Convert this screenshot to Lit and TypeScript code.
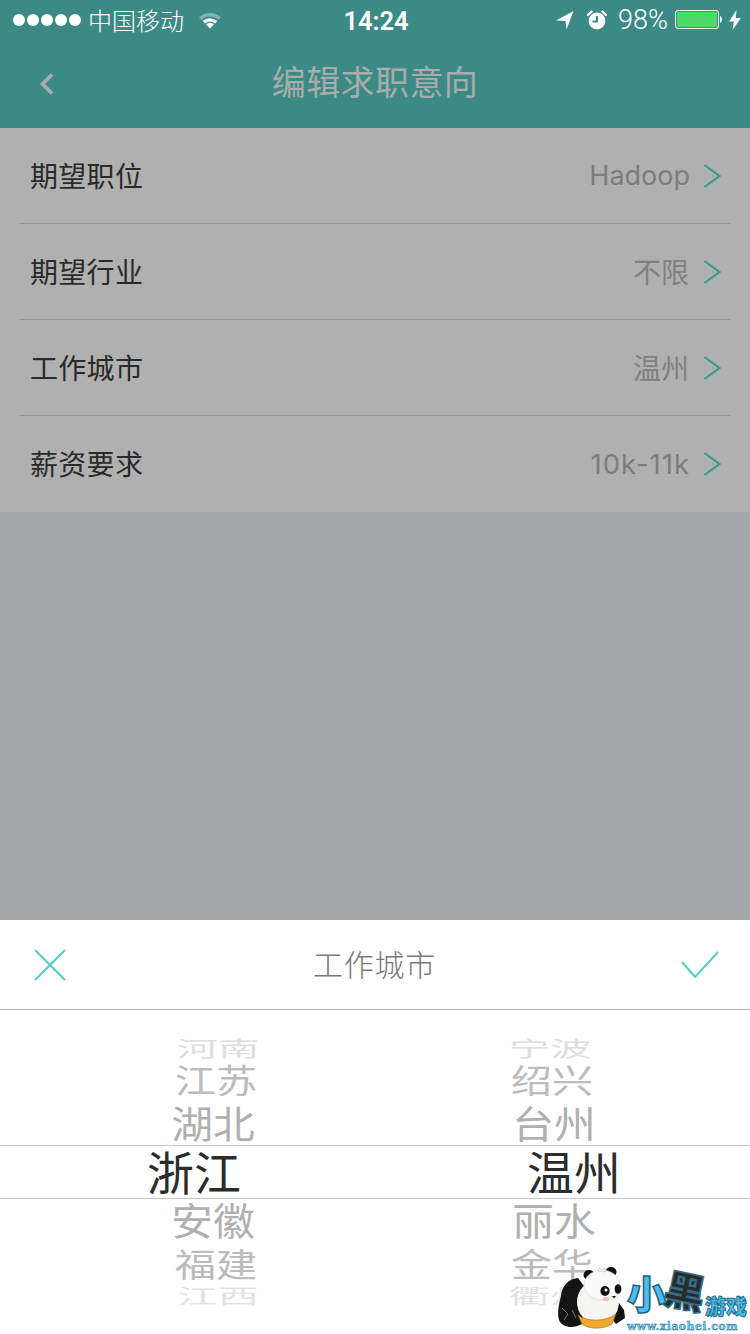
import { LitElement, html, css, svg, unsafeCSS } from "lit";
import { customElement } from "lit/decorators.js";

const CJK = unsafeCSS(`"Noto Sans CJK SC", "Noto Sans", sans-serif`);
const rows = [
  { k: "期望职位", v: "Hadoop", cls: "latin" },
  { k: "期望行业", v: "不限", cls: "" },
  { k: "工作城市", v: "温州", cls: "" },
  { k: "薪资要求", v: "10k-11k", cls: "latin num" },
];
const columns = [
  { cls: "left", items: ["河南", "江苏", "湖北", "浙江", "安徽", "福建", "江西"] },
  { cls: "right", items: ["宁波", "绍兴", "台州", "温州", "丽水", "金华", "衢州"] },
];
const chevron = svg`<svg class="chev" viewBox="0 0 18 24" width="18" height="24"><path d="M1.5 1 L16.5 12 L1.5 23" fill="none" stroke="#329a93" stroke-width="2"/></svg>`;

@customElement("app-root")
export class AppRoot extends LitElement {
  static styles = css`
    :host { display: block; width: 750px; height: 1334px; position: relative; overflow: hidden; background: #a3a7a8; font-family: ${CJK}; }
    .screen { display: flex; flex-direction: column; height: 1334px; }
    .head { height: 128px; background: #3c8a85; color: #fff; flex: none; }
    .status { height: 40px; display: flex; align-items: center; padding: 0 9px 0 13px; position: relative; }
    .dots { display: flex; gap: 2px; margin-right: 7px; }
    .dots i { width: 12px; height: 12px; border-radius: 50%; background: #fff; }
    .carrier { font-size: 24px; line-height: 40px; margin-right: 14px; font-weight: 300; }
    .clock { position: absolute; left: 2px; right: 0; text-align: center; font: 600 25.5px/40px Roboto, sans-serif; padding-top: 1px; }
    .sright { margin-left: auto; display: flex; align-items: center; }
    .loc { margin-right: 13px; }
    .bolt { margin-left: 6px; }
    .pct { font: 300 27px/40px Roboto, sans-serif; margin: 0 7px 0 11px; }
    .nav { height: 88px; display: flex; align-items: center; justify-content: center; position: relative; }
    .back { position: absolute; left: 39px; top: 32px; }
    .title { font-size: 34px; color: #a8acac; font-weight: 400; letter-spacing: .4px; line-height: 1; padding-bottom: 6px; }
    .list { background: #b0b0b0; flex: none; height: 384px; }
    .row { height: 96px; margin: 0 20px; box-sizing: border-box; border-bottom: 1px solid #959595; display: flex; align-items: center; padding: 0 9px 0 10px; }
    .row:last-child { border-bottom: none; }
    .k { font-size: 28px; color: #2a2a2a; font-weight: 400; letter-spacing: .3px; padding-bottom: 2px; }
    .v { margin-left: auto; font-size: 28px; color: #808080; font-weight: 400; margin-right: 14px; padding-bottom: 2px; }
    .v.latin { font-family: Inter, sans-serif; font-size: 27px; font-weight: 400; padding-bottom: 0; color: #7c7c7c; margin-right: 13px; }
    .v.num { font-size: 27.5px; letter-spacing: 1px; }
    .chev { display: block; }
    .gap { flex: 1; }
    .sheet { flex: none; height: 414px; background: #fff; display: flex; flex-direction: column; }
    .bar { height: 90px; flex: none; box-sizing: border-box; border-bottom: 1px solid #ababab; display: flex; align-items: center; justify-content: space-between; padding: 0 31px 0 34px; }
    .bar span { font-size: 30px; color: #7a7a7a; font-weight: 300; letter-spacing: .8px; padding-bottom: 3px; margin-left: 2px; }
    .wheel { position: relative; flex: 1; display: grid; grid-template-columns: 1fr 1fr; padding-top: 26px; align-content: start; }
    .rule { position: absolute; left: 0; right: 0; height: 1px; background: #c6c6c6; }
    .rule.a { top: 135px; }
    .rule.b { top: 188px; }
    .col { display: flex; flex-direction: column; align-items: flex-start; }
    .col.left { padding-left: 174px; }
    .col.right { padding-left: 136px; }
    .it { white-space: nowrap; line-height: 1; display: flex; align-items: center; justify-content: center; width: 84px; }
    .it b { font-weight: 400; display: block; }
    .i0 { height: 22px; font-size: 21px; color: #dedede; }
    .i0 b { transform: scaleX(1.98); }
    .i1 { height: 44px; font-size: 33px; color: #bcbcbc; }
    .i1 b { transform: translateY(-1px) scaleX(1.25); }
    .i2 { height: 45px; font-size: 38px; color: #b0b0b0; }
    .i2 b { transform: translateY(-3px) scaleX(1.1); }
    .i3 { height: 52px; font-size: 46px; color: #2c2c2c; width: 92px; }
    .i3 b { transform: translateY(-3px) scaleX(1.02); }
    .i4 { height: 46px; font-size: 38px; color: #b0b0b0; }
    .i4 b { transform: translateY(-3px) scaleX(1.1); }
    .i5 { height: 41px; font-size: 33px; color: #bcbcbc; }
    .i5 b { transform: translateY(-2px) scaleX(1.25); }
    .i6 { height: 21px; font-size: 20px; color: #e2e2e2; }
    .i6 b { transform: translateY(-1px) scaleX(2.05); }
    .left .i0, .left .i6 { margin-left: 2px; }
    .left .i2, .left .i4 { margin-left: -3px; }
    .left .i3 { margin-left: -26px; }
    .right .i0, .right .i6 { margin-left: -3px; }
    .right .i1, .right .i5 { margin-left: -1px; }
    .right .i2, .right .i4 { margin-left: 1px; }
    .right .i3 { margin-left: 17px; }
    .mark { position: absolute; left: 556px; top: 1264px; width: 194px; height: 70px; }
    .mark svg { position: absolute; left: 0; top: 0; }
    .xiao { position: absolute; left: 71px; top: 9px; font: 900 39px/1 ${CJK}; color: #4dbcee; -webkit-text-stroke: 1.5px #1d5f80; }
    .hei { position: absolute; left: 109px; top: 5px; font: 900 41px/1 ${CJK}; color: #2b2b2b; -webkit-text-stroke: 1.5px #2f6f8c; transform: rotate(12deg); }
    .game { position: absolute; left: 149px; top: 31px; font: 900 21px/1 ${CJK}; color: #4fb9e6; -webkit-text-stroke: 1px #1d6f90; }
    .url { position: absolute; left: 71px; top: 57px; font: 700 11px/1 "DejaVu Serif", serif; color: #6cc8ee; letter-spacing: .4px; -webkit-text-stroke: .4px #1d6f90; }
  `;

  render() {
    return html`<div class="screen">
      <div class="head">
        <div class="status">
          <div class="dots"><i></i><i></i><i></i><i></i><i></i></div>
          <span class="carrier">中国移动</span>
          <svg width="24" height="18" viewBox="0 0 24 18">
            <path d="M1 6.5 A16 16 0 0 1 23 6.5 L20.6 9 A12.6 12.6 0 0 0 3.4 9 Z" fill="#fff" opacity=".35"/>
            <path d="M4.7 10 A11 11 0 0 1 19.3 10 L17 12.4 A8 8 0 0 0 7 12.4 Z" fill="#fff"/>
            <path d="M8 13.3 A6.4 6.4 0 0 1 16 13.3 L12 17.6 Z" fill="#fff"/>
          </svg>
          <div class="clock">14:24</div>
          <div class="sright">
            <svg class="loc" width="18" height="20" viewBox="0 0 18 20"><path d="M0 10.5 L17.5 1 L10.5 19.5 L9.5 11 Z" fill="#fff"/></svg>
            <svg width="20" height="20" viewBox="0 0 20 20"><circle cx="10" cy="11" r="8.4" fill="#fff"/><path d="M10 6 V11.5 H5.5" fill="none" stroke="#3c8a85" stroke-width="2"/><path d="M1 5 L4.5 1.5 M19 5 L15.5 1.5" stroke="#fff" stroke-width="2.4" stroke-linecap="round"/></svg>
            <span class="pct">98%</span>
            <svg width="48" height="20" viewBox="0 0 48 20"><rect x=".5" y=".5" width="43" height="18" rx="2.5" fill="none" stroke="#fff"/><rect x="2" y="2" width="40" height="15" rx="1.2" fill="#4cdb6b"/><path d="M45 6 C47.5 6.5 47.5 12.5 45 13 Z" fill="#fff"/></svg>
            <svg class="bolt" width="12" height="20" viewBox="0 0 12 20"><path d="M7.5 0 L0 11.5 H4.8 L3.5 20 L12 8 H6.8 Z" fill="#fff"/></svg>
          </div>
        </div>
        <div class="nav">
          <svg class="back" width="16" height="24" viewBox="0 0 16 24"><path d="M13 2.5 L3.5 12 L13 21.5" fill="none" stroke="#a8acac" stroke-width="3.6"/></svg>
          <span class="title">编辑求职意向</span>
        </div>
      </div>
      <div class="list">
        ${rows.map(
          (r) => html`<div class="row">
            <span class="k">${r.k}</span>
            <span class="v ${r.cls}">${r.v}</span>
            ${chevron}
          </div>`
        )}
      </div>
      <div class="gap"></div>
      <div class="sheet">
        <div class="bar">
          <svg width="32" height="32" viewBox="0 0 32 32"><path d="M1 1 L31 31 M31 1 L1 31" fill="none" stroke="#52cdc6" stroke-width="2"/></svg>
          <span>工作城市</span>
          <svg width="38" height="28" viewBox="0 0 38 28"><path d="M1 11 L14 26 L37 1" fill="none" stroke="#52cdc6" stroke-width="2"/></svg>
        </div>
        <div class="wheel">
          <div class="rule a"></div>
          <div class="rule b"></div>
          ${columns.map(
            (c) => html`<div class="col ${c.cls}">
              ${c.items.map((t, i) => html`<div class="it i${i}"><b>${t}</b></div>`)}
            </div>`
          )}
        </div>
      </div>
    </div>
    <div class="mark">
      <svg width="72" height="70" viewBox="0 0 72 70">
        <path d="M22 14 C12 15 6 22 5 32 C3 40 1 48 3 56 C6 64 18 65 26 60 L34 30 Z" fill="#141414"/>
        <path d="M6 44 L12 50 L8 56 M16 46 L20 54" fill="none" stroke="#777" stroke-width="1"/>
        <path d="M58 32 L68 46 L69 54 L60 60 L52 50 Z" fill="#141414"/>
        <ellipse cx="42" cy="38" rx="21" ry="22" fill="#f5f5f2"/>
        <path d="M22 51 C30 58 50 58 60 50 L56 60 C46 66 32 65 26 60 Z" fill="#f0a92e" stroke="#8a6a20" stroke-width=".6"/>
        <ellipse cx="33" cy="11" rx="5.5" ry="5" fill="#111"/>
        <ellipse cx="55" cy="8" rx="5.5" ry="5" fill="#111"/>
        <ellipse cx="46" cy="21" rx="18" ry="15" fill="#fafafa" stroke="#ccc" stroke-width=".5"/>
        <path d="M42 7 L44 3 L46 6 L49 4 L49 8 Z" fill="#f3f3f3" stroke="#bbb" stroke-width=".5"/>
        <ellipse cx="49" cy="27" rx="4.6" ry="5" fill="#111"/>
        <ellipse cx="62" cy="25" rx="3.4" ry="4.8" fill="#111"/>
        <circle cx="50" cy="26" r="1.5" fill="#fff"/>
        <path d="M56 32 h4 l-2 2.6 Z" fill="#111"/>
        <ellipse cx="50" cy="35" rx="3.2" ry="2" fill="#f6b8b8"/>
      </svg>
      <span class="xiao">小</span>
      <span class="hei">黑</span>
      <span class="game">游戏</span>
      <span class="url">www.xiaohei.com</span>
    </div>`;
  }
}
